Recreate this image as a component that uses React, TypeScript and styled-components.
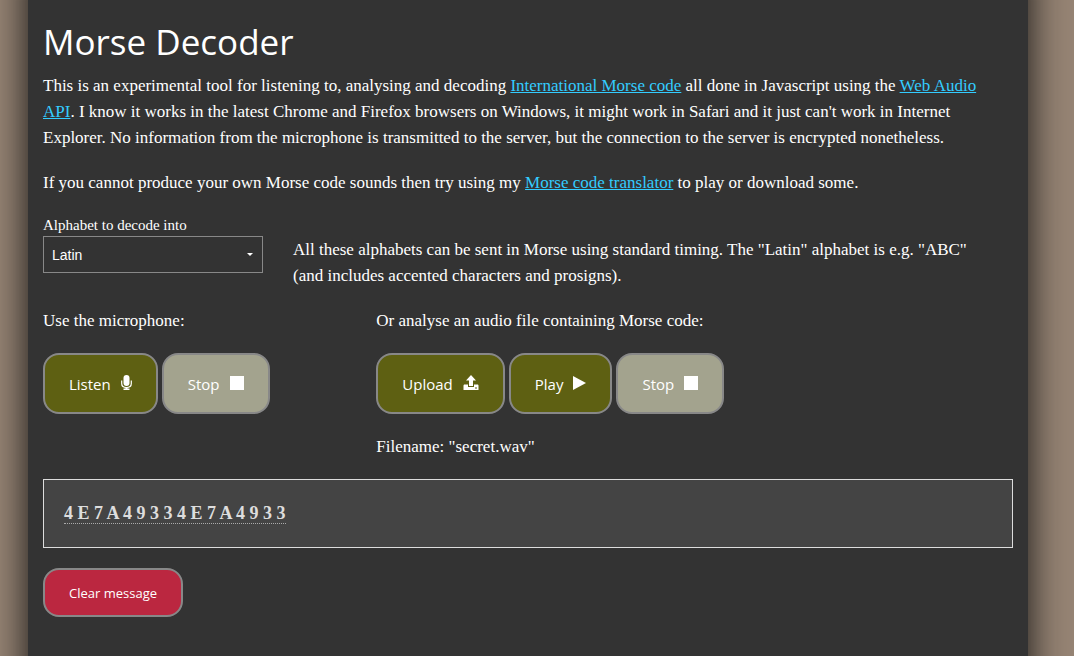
import React from "react";
import styled, { createGlobalStyle } from "styled-components";

const serif = `Georgia, "Liberation Serif", serif`;
const sans = `"Open Sans", "Noto Sans", sans-serif`;

const GlobalStyle = createGlobalStyle`
  * { box-sizing: border-box; }
  body {
    margin: 0;
    color: #fff;
    font-family: ${serif};
    font-size: 17px;
    line-height: 26px;
  }
`;

const Backdrop = styled.div`
  min-height: 100vh;
  padding-right: 18px;
  overflow: hidden;
  background: #968474;
`;

const Page = styled.main`
  max-width: 1000px;
  min-height: calc(100vh + 80px);
  margin: -40px auto;
  padding: 60px 15px 80px;
  background: #333;
  box-shadow: 0 0 36px #111;
`;

const Title = styled.h1`
  margin: 0 0 10px;
  font-family: ${sans};
  font-size: 35px;
  font-weight: 400;
  line-height: 43px;
`;

const Text = styled.p`
  margin: 0 0 19px;
`;

const Link = styled.a`
  color: #3cf;
  text-decoration: underline;
`;

const Row = styled.div`
  display: grid;
  grid-template-columns: repeat(12, 1fr);
  column-gap: 30px;
`;

const Column = styled.section<{ $span: number }>`
  grid-column: span ${(p) => p.$span};
`;

const HintColumn = styled(Column)`
  padding-top: 22px;
`;

const Label = styled.label`
  display: block;
  font-size: 15px;
  line-height: 21px;
`;

const SelectBox = styled.div`
  display: grid;
  align-items: center;
  & > * { grid-area: 1 / 1; }
`;

const Select = styled.select`
  width: 100%;
  height: 37px;
  padding: 0 8px;
  appearance: none;
  border: 1px solid #888;
  border-radius: 0;
  background: #333;
  color: #fff;
  font: 14px "Liberation Sans", sans-serif;
`;

const Caret = styled.svg`
  justify-self: end;
  margin-right: 10px;
  pointer-events: none;
`;

const Buttons = styled.div`
  display: flex;
  gap: 4px;
  margin-bottom: 20px;
`;

const Button = styled.button<{ $tone: "olive" | "red" }>`
  display: flex;
  align-items: center;
  gap: 10px;
  height: ${(p) => (p.$tone === "red" ? 49 : 61)}px;
  padding: 0 24px;
  border: 2px solid #888;
  border-radius: 16px;
  background: ${(p) => (p.$tone === "red" ? "#bb2740" : "#5e6012")};
  color: #fff;
  font-family: ${sans};
  font-size: ${(p) => (p.$tone === "red" ? 13 : 15)}px;
  white-space: nowrap;
  &:disabled { background: #a3a38e; }
`;

const Icon = styled.svg`
  display: block;
  margin-bottom: 2px;
  fill: #fff;
`;

const Message = styled.output`
  display: block;
  margin-bottom: 20px;
  padding: 21px 20px;
  border: 1px solid #ddd;
  background: #444;
  color: #ddd;
  font-size: 18px;
  font-weight: 700;
  line-height: 25px;
`;

const Decoded = styled.span`
  border-bottom: 1px dotted #aaa;
`;

const MicIcon = () => (
  <Icon width="11" height="15" viewBox="0 0 11 15" aria-hidden="true">
    <rect x="2.500" y="0" width="6" height="11" rx="3" />
    <path d="M.7 5.500v3c0 2.500 2 4 4.800 4s4.800-1.500 4.800-4v-3" fill="none" stroke="#fff" strokeWidth="1.200" />
    <path d="M4.500 12h2v1.500h2V15h-6v-1.500h2z" />
  </Icon>
);

const StopIcon = () => (
  <Icon width="14" height="14" viewBox="0 0 14 14" aria-hidden="true">
    <rect width="14" height="14" />
  </Icon>
);

const PlayIcon = () => (
  <Icon width="13" height="14" viewBox="0 0 13 14" aria-hidden="true">
    <path d="M0 0 13 7 0 14z" />
  </Icon>
);

const UploadIcon = () => (
  <Icon width="16" height="15" viewBox="0 0 16 15" aria-hidden="true">
    <path d="M8 0l5 5.500h-3V11H6V5.500H3z" />
    <path d="M1 9.500h4V12h6V9.500h4l.5 1V15H.5v-4.500zM12 12.500v1h2v-1z" fillRule="evenodd" />
  </Icon>
);

export default function App() {
  return (
    <>
      <GlobalStyle />
      <Backdrop>
        <Page>
          <Title>Morse Decoder</Title>
          <Text>
            This is an experimental tool for listening to, analysing and decoding{" "}
            <Link href="#morse">International Morse code</Link> all done in Javascript using the{" "}
            <Link href="#web-audio">
              Web Audio
              <br />
              API
            </Link>
            . I know it works in the latest Chrome and Firefox browsers on Windows, it might work in
            Safari and it just can't work in Internet
            <br />
            Explorer. No information from the microphone is transmitted to the server, but the
            connection to the server is encrypted nonetheless.
          </Text>
          <Text>
            If you cannot produce your own Morse code sounds then try using my{" "}
            <Link href="#translator">Morse code translator</Link> to play or download some.
          </Text>
          <Row>
            <Column $span={3}>
              <Label htmlFor="alphabet">Alphabet to decode into</Label>
              <SelectBox>
                <Select id="alphabet" defaultValue="Latin">
                  <option>Latin</option>
                </Select>
                <Caret width="6" height="3" viewBox="0 0 6 3" aria-hidden="true">
                  <path d="M0 0h6L3 3z" fill="#fff" />
                </Caret>
              </SelectBox>
            </Column>
            <HintColumn $span={9}>
              <Text>
                All these alphabets can be sent in Morse using standard timing. The "Latin" alphabet is
                e.g. "ABC"
                <br />
                (and includes accented characters and prosigns).
              </Text>
            </HintColumn>
          </Row>
          <Row>
            <Column $span={4}>
              <Text>Use the microphone:</Text>
              <Buttons>
                <Button type="button" $tone="olive">Listen <MicIcon /></Button>
                <Button type="button" $tone="olive" disabled>Stop <StopIcon /></Button>
              </Buttons>
            </Column>
            <Column $span={8}>
              <Text>Or analyse an audio file containing Morse code:</Text>
              <Buttons>
                <Button type="button" $tone="olive">Upload <UploadIcon /></Button>
                <Button type="button" $tone="olive">Play <PlayIcon /></Button>
                <Button type="button" $tone="olive" disabled>Stop <StopIcon /></Button>
              </Buttons>
              <Text>Filename: "secret.wav"</Text>
            </Column>
          </Row>
          <Message>
            <Decoded>4 E 7 A 4 9 3 3 4 E 7 A 4 9 3 3</Decoded>
          </Message>
          <Button type="button" $tone="red">Clear message</Button>
        </Page>
      </Backdrop>
    </>
  );
}
